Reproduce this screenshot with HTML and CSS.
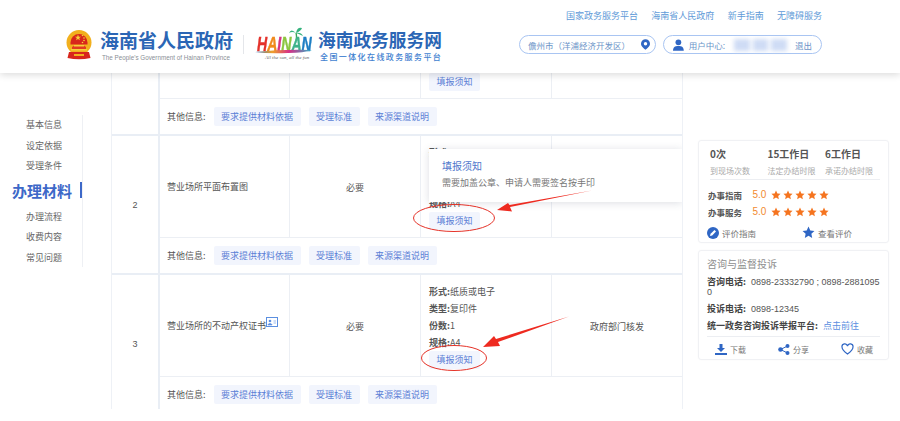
FILE: index.html
```html
<!DOCTYPE html>
<html lang="zh-CN">
<head>
  <meta charset="UTF-8" />
  <meta name="viewport" content="width=device-width, initial-scale=1.0"/>
  <title>海南政务服务网 | 办理材料</title>
  <link rel="stylesheet" href="styles.css">
</head>
<body>
  <svg width="0" height="0" class="defs">
    <symbol id="star" viewBox="0 0 24 24"><path d="M12 1l3.300 7.200 7.700.9-5.700 5.300 1.500 7.700L12 18.200 5.200 22.100l1.500-7.700L1 9.100l7.700-.9z"/></symbol>
  </svg>

  <header class="site-header">
    <div class="brand">
      <svg class="emblem" width="28" height="30" viewBox="0 0 26 30">
        <circle cx="13" cy="12.500" r="12.500" fill="#f2b01e"/>
        <path d="M4.500 12.500a8.500 8.500 0 0 1 17 0v2h-17z" fill="#d8261c"/>
        <path d="M12 4.500l.8 2.200h2.300l-1.900 1.400.7 2.200-1.900-1.400-1.900 1.400.7-2.200-1.900-1.400h2.300z" fill="#f6cf3a"/>
        <circle cx="16.500" cy="5.500" r=".8" fill="#f6cf3a"/>
        <circle cx="18" cy="8" r=".8" fill="#f6cf3a"/>
        <circle cx="18" cy="10.500" r=".8" fill="#f6cf3a"/>
        <circle cx="16.500" cy="12.500" r=".8" fill="#f6cf3a"/>
        <path d="M6 20v-3l3-2h8l3 2v3z" fill="#e23a22"/>
        <path d="M8 15h10v1.500H8zM5 19h16v1.500H5z" fill="#f6cf3a"/>
        <path d="M3 22h20l1.500 6q-11.500 2.500-23 0z" fill="#d8261c"/>
        <path d="M8 24h10v2H8z" fill="#f2b01e"/>
      </svg>
      <div class="brand-gov">
        <div class="gov-name">海南省人民政府</div>
        <div class="gov-en">The People's Government of Hainan Province</div>
      </div>
      <div class="brand-sep"></div>
      <div class="hainan-logo">
        <svg class="palm" width="16" height="14" viewBox="0 0 16 14">
          <path d="M8 14q1-5 0-8" stroke="#3aa655" stroke-width="1.400" fill="none"/>
          <path d="M8 6Q3 1 1 6q3-2 7 0zM8 6q1-6 6-5-1 3-6 5zM8 6q5-1 7 3-4-2-7-3z" fill="#36b37e"/>
        </svg>
        <div class="hainan-word"><span class="c-red">H</span><span class="c-orange">A</span><span class="c-pink">I</span><span class="c-yellow">N</span><span class="c-green">A</span><span class="c-blue">N</span></div>
        <svg class="hainan-wave" width="57" height="5" viewBox="0 0 57 5">
          <defs>
            <linearGradient id="wave-fill">
              <stop offset="0" stop-color="#2c6fc0"/>
              <stop offset=".3" stop-color="#f0a12a"/>
              <stop offset=".6" stop-color="#d62f86"/>
              <stop offset="1" stop-color="#2bb3c9"/>
            </linearGradient>
          </defs>
          <path d="M0 3Q28 0 57 1q-8 3-24 3Q14 5 0 3z" fill="url(#wave-fill)"/>
        </svg>
        <div class="hainan-slogan">All the sun, all the fun</div>
      </div>
      <div class="brand-portal">
        <div class="portal-name">海南政务服务网</div>
        <div class="portal-sub">全国一体化在线政务服务平台</div>
      </div>
    </div>

    <div class="header-right">
      <nav class="top-links">
        <a>国家政务服务平台</a>
        <a>海南省人民政府</a>
        <a>新手指南</a>
        <a>无障碍服务</a>
      </nav>
      <div class="pills">
        <div class="pill pill-city">
          <span>儋州市（洋浦经济开发区）</span>
          <svg width="9" height="11" viewBox="0 0 12 14"><path fill-rule="evenodd" d="M6 0a6 6 0 0 1 6 6c0 3.500-4 6.500-6 8-2-1.500-6-4.500-6-8a6 6 0 0 1 6-6zm0 3.700a2.300 2.300 0 1 0 0 4.600 2.300 2.300 0 0 0 0-4.600z" fill="#2f66c4"/></svg>
        </div>
        <div class="pill pill-user">
          <svg width="11" height="12" viewBox="0 0 12 13"><circle cx="6" cy="3.500" r="3.200" fill="#2f66c4"/><path d="M0 13c0-4 2-5.500 6-5.500s6 1.500 6 5.500z" fill="#2f66c4"/></svg>
          <span class="user-label">用户中心:</span>
          <span class="user-mask"><i></i><i></i><i></i></span>
          <span>退出</span>
        </div>
      </div>
    </div>
  </header>

  <main class="page">
    <aside class="side-nav">
      <ul>
        <li>基本信息</li>
        <li>设定依据</li>
        <li>受理条件</li>
        <li class="active">办理材料</li>
        <li>办理流程</li>
        <li>收费内容</li>
        <li>常见问题</li>
      </ul>
    </aside>

    <section class="materials">
      <div class="group group-cut">
        <div class="num"></div>
        <div class="group-body">
          <div class="cells cells-cut">
            <div class="cell"></div>
            <div class="cell"></div>
            <div class="cell cell-form"><button class="notice-btn">填报须知</button></div>
            <div class="cell"></div>
          </div>
          <div class="other">
            <span class="other-label">其他信息:</span>
            <a class="tag">要求提供材料依据</a>
            <a class="tag">受理标准</a>
            <a class="tag">来源渠道说明</a>
          </div>
        </div>
      </div>

      <div class="group">
        <div class="num">2</div>
        <div class="group-body">
          <div class="cells">
            <div class="cell cell-name">营业场所平面布置图</div>
            <div class="cell cell-center">必要</div>
            <div class="cell cell-form">
              <p><b>形式:</b></p>
              <div class="form-gap"></div>
              <p><b>规格:</b>A4</p>
              <button class="notice-btn">填报须知</button>
              <div class="popover">
                <h4>填报须知</h4>
                <p>需要加盖公章、申请人需要签名按手印</p>
              </div>
            </div>
            <div class="cell cell-center"></div>
          </div>
          <div class="other">
            <span class="other-label">其他信息:</span>
            <a class="tag">要求提供材料依据</a>
            <a class="tag">受理标准</a>
            <a class="tag">来源渠道说明</a>
          </div>
        </div>
      </div>

      <div class="group">
        <div class="num">3</div>
        <div class="group-body">
          <div class="cells">
            <div class="cell cell-name">营业场所的不动产权证书
              <svg class="card-icon" width="12" height="10" viewBox="0 0 12 10"><rect x=".5" y=".5" width="11" height="9" fill="none" stroke="#5b8fe0"/><circle cx="4" cy="4" r="1.300" fill="#5b8fe0"/><path d="M2 8c0-2 4-2 4 0zM7.500 4H10M7.500 6H10" fill="#5b8fe0" stroke="#5b8fe0" stroke-width=".6"/></svg>
            </div>
            <div class="cell cell-center">必要</div>
            <div class="cell cell-form">
              <p><b>形式:</b>纸质或电子</p>
              <p><b>类型:</b>复印件</p>
              <p><b>份数:</b>1</p>
              <p><b>规格:</b>A4</p>
              <button class="notice-btn">填报须知</button>
            </div>
            <div class="cell cell-center">政府部门核发</div>
          </div>
          <div class="other">
            <span class="other-label">其他信息:</span>
            <a class="tag">要求提供材料依据</a>
            <a class="tag">受理标准</a>
            <a class="tag">来源渠道说明</a>
          </div>
        </div>
      </div>
    </section>

    <aside class="side-cards">
      <div class="card card-stats">
        <div class="stats">
          <div class="stat"><strong>0次</strong><span>到现场次数</span></div>
          <div class="stat"><strong>15工作日</strong><span>法定办结时限</span></div>
          <div class="stat"><strong>6工作日</strong><span>承诺办结时限</span></div>
        </div>
        <div class="rating">
          <b>办事指南</b><em>5.0</em>
          <span class="stars"><svg><use href="#star"/></svg><svg><use href="#star"/></svg><svg><use href="#star"/></svg><svg><use href="#star"/></svg><svg><use href="#star"/></svg></span>
        </div>
        <div class="rating">
          <b>办事服务</b><em>5.0</em>
          <span class="stars"><svg><use href="#star"/></svg><svg><use href="#star"/></svg><svg><use href="#star"/></svg><svg><use href="#star"/></svg><svg><use href="#star"/></svg></span>
        </div>
        <div class="review-links">
          <a>
            <svg width="12" height="12" viewBox="0 0 12 12"><circle cx="6" cy="6" r="6" fill="#2f66c4"/><path d="M3 9l.6-2.200L7.500 3 9 4.500 5.200 8.400z" fill="#fff"/></svg>
            评价指南
          </a>
          <a>
            <svg class="review-star" width="13" height="13"><use href="#star"/></svg>
            查看评价
          </a>
        </div>
      </div>

      <div class="card card-contact">
        <h3>咨询与监督投诉</h3>
        <p><b>咨询电话:</b>&nbsp; 0898-23332790 ; 0898-28810950</p>
        <p><b>投诉电话:</b>&nbsp; 0898-12345</p>
        <p><b>统一政务咨询投诉举报平台:</b>&nbsp; <a>点击前往</a></p>
        <div class="actions">
          <a>
            <svg width="12" height="11" viewBox="0 0 12 11"><path d="M4.500 0h3v4H10L6 8 2 4h2.500zM0 9h12v2H0z" fill="#2f66c4"/></svg>
            下载
          </a>
          <a>
            <svg width="12" height="11" viewBox="0 0 12 11"><path d="M9.500 2L2.500 5.500l7 3.500" stroke="#2f66c4" fill="none"/><circle cx="9.500" cy="2" r="2" fill="#2f66c4"/><circle cx="2.500" cy="5.500" r="2.300" fill="#2f66c4"/><circle cx="9.500" cy="9" r="2" fill="#2f66c4"/></svg>
            分享
          </a>
          <a>
            <svg width="13" height="12" viewBox="0 0 13 12"><path d="M6.500 11C3 8.500 1 6.500 1 4a2.800 2.800 0 0 1 5.500-1A2.800 2.800 0 0 1 12 4c0 2.500-2 4.500-5.500 7z" fill="none" stroke="#2f66c4" stroke-width="1.200"/></svg>
            收藏
          </a>
        </div>
      </div>
    </aside>

    <!-- red callouts drawn on top of the rows -->
    <svg class="callouts" width="900" height="348" viewBox="0 73 900 348">
      <ellipse cx="454" cy="218" rx="40.500" ry="13.500"/>
      <ellipse cx="454" cy="358" rx="32.500" ry="12.500"/>
      <polygon class="arrow" points="592,190.500 510,207 512,211.500 497,210 508,203 509.500,205"/>
      <polygon class="arrow" points="569,316.500 498,342 500,346 483,347 494,336 496,339"/>
    </svg>
  </main>
</body>
</html>
```

FILE: styles.css
```css
* { box-sizing: border-box; }
html, body { margin: 0; padding: 0; background: #fff; }
body { width: 900px; height: 421px; overflow: hidden; font-family: "Noto Sans CJK SC", "Noto Sans", sans-serif; font-size: 9px; color: #555; }
p, h3, h4, ul { margin: 0; padding: 0; }
.defs { position: absolute; }

/* header */
.site-header { position: relative; z-index: 3; height: 73px; padding: 0 78px 0 65px; display: flex; justify-content: space-between; background: #fff; box-shadow: 0 2px 7px rgba(0,0,0,.14); }
.brand { display: flex; align-items: center; padding-top: 15px; }
.emblem { margin-right: 7px; margin-top: 1px; }
.brand-gov { width: 134px; margin-top: 3px; }
.gov-name { font-size: 19px; line-height: 22px; font-weight: 700; color: #2b66b5; white-space: nowrap; }
.gov-en { font-family: "Liberation Sans", sans-serif; font-size: 6.300px; line-height: 10px; margin-top: 2px; color: #8a8f96; padding-left: 2px; white-space: nowrap; }
.brand-sep { width: 1px; height: 19px; margin: 0 11px 0 9px; background: #e4e6ea; }
.hainan-logo { position: relative; width: 57px; height: 32px; margin-right: 6px; }
.palm { position: absolute; left: 33px; top: -1px; }
.hainan-word { position: absolute; left: 2px; top: 6px; font-family: "Liberation Sans", sans-serif; font-size: 21px; line-height: 19px; font-weight: 700; font-style: italic; white-space: nowrap; -webkit-text-stroke: .5px currentColor; transform: scaleX(.67); transform-origin: left top; }
.c-red { color: #e4322b; }
.c-orange { color: #f08a1d; }
.c-pink { color: #d6337f; }
.c-green { color: #3fb28a; }
.c-yellow { color: #8cc63f; }
.c-blue { color: #1f7fc4; }
.hainan-wave { position: absolute; left: 0; top: 21px; }
.hainan-slogan { position: absolute; left: 10px; top: 27px; font-family: "Liberation Serif", serif; font-size: 5px; line-height: 6px; font-style: italic; color: #666; white-space: nowrap; }
.brand-portal { margin-top: 2px; }
.portal-name { font-size: 17.700px; line-height: 21px; font-weight: 700; color: #2b66b5; white-space: nowrap; }
.portal-sub { font-size: 8px; line-height: 11px; margin-top: 1px; font-weight: 500; color: #3f7fd0; padding-left: 2px; letter-spacing: 1.400px; white-space: nowrap; }

.header-right { display: flex; flex-direction: column; align-items: flex-end; padding-top: 9px; }
.top-links { display: flex; gap: 13.300px; line-height: 14px; color: #5f9bd8; }
.pills { display: flex; gap: 7px; margin-top: 12px; }
.pill { height: 19px; display: flex; align-items: center; border: 1px solid #a9c5f2; border-radius: 10px; font-size: 8.500px; color: #6b94c8; white-space: nowrap; }
.pill-city { width: 137px; padding: 0 5px 0 8px; justify-content: space-between; }
.pill-user { width: 159px; padding: 0 9px; }
.user-label { margin-left: 5px; }
.user-mask { width: 54px; height: 12px; margin: 0 8px 0 9px; display: flex; gap: 3px; filter: blur(2px); }
.user-mask i { flex: 1; background: #cfdcf5; }

/* page columns */
.page { position: relative; display: flex; height: 348px; }
.side-nav { width: 111px; padding: 42px 0 0 0; flex: none; }
.side-nav ul { list-style: none; width: 83px; height: 152px; padding-left: 26px; border-right: 1px solid #eef0f4; }
.side-nav li { height: 20.600px; line-height: 19px; white-space: nowrap; color: #666; }
.side-nav li.active { height: 30px; line-height: 27px; margin-left: -14px; font-size: 15px; font-weight: 700; color: #3d68c8; position: relative; }
.side-nav li.active::after { content: ""; position: absolute; right: 0; top: 5px; width: 2px; height: 16px; background: #3d68c8; }

/* materials table */
.materials { width: 572px; height: 336px; flex: none; overflow: hidden; border-left: 1px solid #eef1f6; border-right: 1px solid #eef1f6; }
.group { display: flex; border-bottom: 2px solid #e9eef5; }
.num { width: 48px; flex: none; display: flex; align-items: center; justify-content: center; font-family: "Liberation Sans", sans-serif; border-right: 2px solid #e9eef5; }
.group-body { flex: 1; min-width: 0; }
.cells { display: grid; grid-template-columns: 130px 131px 131px 1fr; height: 102px; border-bottom: 1px solid #eceff4; }
.cells-cut { height: 26px; }
.cell { position: relative; border-right: 1px solid #eceff4; padding: 0 7px; }
.cell:last-child { border-right: none; }
.cell-name { line-height: 102px; white-space: nowrap; }
.cell-center { display: flex; align-items: center; justify-content: center; }
.cell-form { padding: 8px 0 0 8px; line-height: 17px; }
.cells-cut .cell-form { padding-top: 0; }
.cell-form p b { font-weight: 700; }
.form-gap { height: 34px; }
.notice-btn { display: block; width: 51px; height: 18px; padding: 0; border: none; border-radius: 2px; background: #f2f5fd; font: inherit; line-height: 18px; color: #5b7fd6; }
.card-icon { vertical-align: 2px; margin-left: -2px; }

.popover { position: absolute; left: 8px; top: 13px; width: 253px; height: 53px; padding: 8px 13px; background: #fff; box-shadow: 0 1px 8px rgba(60,70,100,.18); z-index: 1; }
.popover h4 { font-size: 10px; line-height: 17px; font-weight: 400; color: #4f77cc; }
.popover p { line-height: 18px; color: #777; }

.other { height: 35px; padding-left: 7px; display: flex; align-items: center; gap: 8px; }
.tag { height: 19px; padding: 0 7.500px; line-height: 19px; border-radius: 2px; background: #f2f5fd; color: #5b7fd6; }

/* right column */
.side-cards { width: 205px; padding: 67px 0 0 15px; flex: none; }
.card { width: 191px; border: 1px solid #f0f1f4; border-radius: 3px; box-shadow: 0 0 2px rgba(0,0,0,.03); }
.card-stats { height: 103px; padding: 6px 8px 0 9px; }
.stats { display: flex; height: 33px; margin: 0 0 6px 2px; border-bottom: 1px solid #eceef2; }
.stat { width: 57.500px; flex: none; display: flex; flex-direction: column; }
.stat strong { font-size: 10px; line-height: 14px; margin-bottom: 4px; font-weight: 700; color: #555; white-space: nowrap; }
.stat span { font-size: 8px; line-height: 12px; color: #aaa; white-space: nowrap; }
.rating { display: flex; align-items: center; height: 17px; }
.rating b { width: 44.500px; font-size: 8.500px; font-weight: 700; color: #555; white-space: nowrap; }
.rating em { width: 18.500px; font-family: "Liberation Sans", sans-serif; font-size: 10px; font-style: normal; color: #f28a2e; }
.stars { display: flex; gap: 2px; }
.stars svg { width: 10px; height: 10px; fill: #f5741f; }
.review-links { display: flex; margin: 6px 0 0 -1px; font-size: 8.500px; color: #777; }
.review-links a { display: flex; align-items: center; gap: 3px; width: 95px; flex: none; }
.review-star { fill: #2f66c4; }

.card-contact { height: 110px; margin-top: 7px; padding: 4px 6px 0 8px; }
.card-contact h3 { font-size: 10px; line-height: 17px; font-weight: 400; color: #8e8e8e; margin-bottom: 5px; }
.card-contact p { line-height: 10px; margin-bottom: 7px; word-break: break-all; font-family: "Liberation Sans", "Noto Sans CJK SC", sans-serif; }
.card-contact p b { font-family: "Noto Sans CJK SC", sans-serif; font-weight: 700; color: #444; }
.card-contact p a { font-family: "Noto Sans CJK SC", sans-serif; color: #5b8fe0; }
.actions { display: flex; margin: -2px 2px 0 0; padding: 6px 0 0 8px; border-top: 1px solid #eceef2; font-size: 8px; color: #777; }
.actions a { display: flex; align-items: center; gap: 3px; width: 63px; flex: none; }

/* callouts */
.callouts { position: absolute; left: 0; top: 0; z-index: 2; pointer-events: none; }
.callouts ellipse { fill: none; stroke: #e53228; stroke-width: 1; }
.callouts .arrow { fill: #ee2a20; }
```
